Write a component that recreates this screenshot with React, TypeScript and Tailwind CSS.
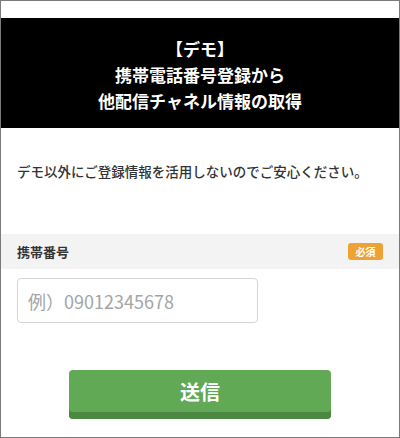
export default function App() {
  return (
    <div
      className="h-[438px] w-[400px] overflow-hidden border border-[#7a7a7a] bg-white"
      style={{ fontFamily: '"Noto Sans CJK JP", "Noto Sans", sans-serif' }}
    >
      {/* Header */}
      <div className="mt-[17px] flex h-[110px] flex-col items-center justify-center bg-black pt-[3px] text-[17px] font-bold leading-[26px] text-white">
        <p>【デモ】</p>
        <p>携帯電話番号登録から</p>
        <p>他配信チャネル情報の取得</p>
      </div>

      {/* Notice */}
      <p className="mt-[33px] px-4 text-[13.5px] font-medium leading-[20px] text-[#333]">
        デモ以外にご登録情報を活用しないのでご安心ください。
      </p>

      {/* Label row */}
      <div className="mt-[53px] flex h-[35px] items-center justify-between bg-[#f3f3f3] pl-4 pr-4">
        <span className="text-[13px] font-bold text-[#333]">携帯番号</span>
        <span className="flex h-[17px] w-[35px] items-center justify-center rounded-[3px] bg-[#efa234] text-[10px] font-bold text-white">
          必須
        </span>
      </div>

      {/* Input */}
      <div className="px-4 pt-[9px]">
        <input
          className="h-[45px] w-[241px] rounded-[4px] border border-[#d5d5d5] px-[10px] text-[18px] text-[#333] placeholder:text-[#a5a5a5] outline-none"
          style={{ fontFamily: '"Noto Sans CJK JP", sans-serif' }}
          placeholder="例）09012345678"
        />
      </div>

      {/* Submit */}
      <div className="mt-[47px] flex justify-center">
        <button className="h-[49px] w-[262px] rounded-[4px] bg-[#62a955] pb-[6px] text-[20px] font-bold text-white shadow-[inset_0_-7px_0_#4c8842]">
          送信
        </button>
      </div>
    </div>
  );
}
